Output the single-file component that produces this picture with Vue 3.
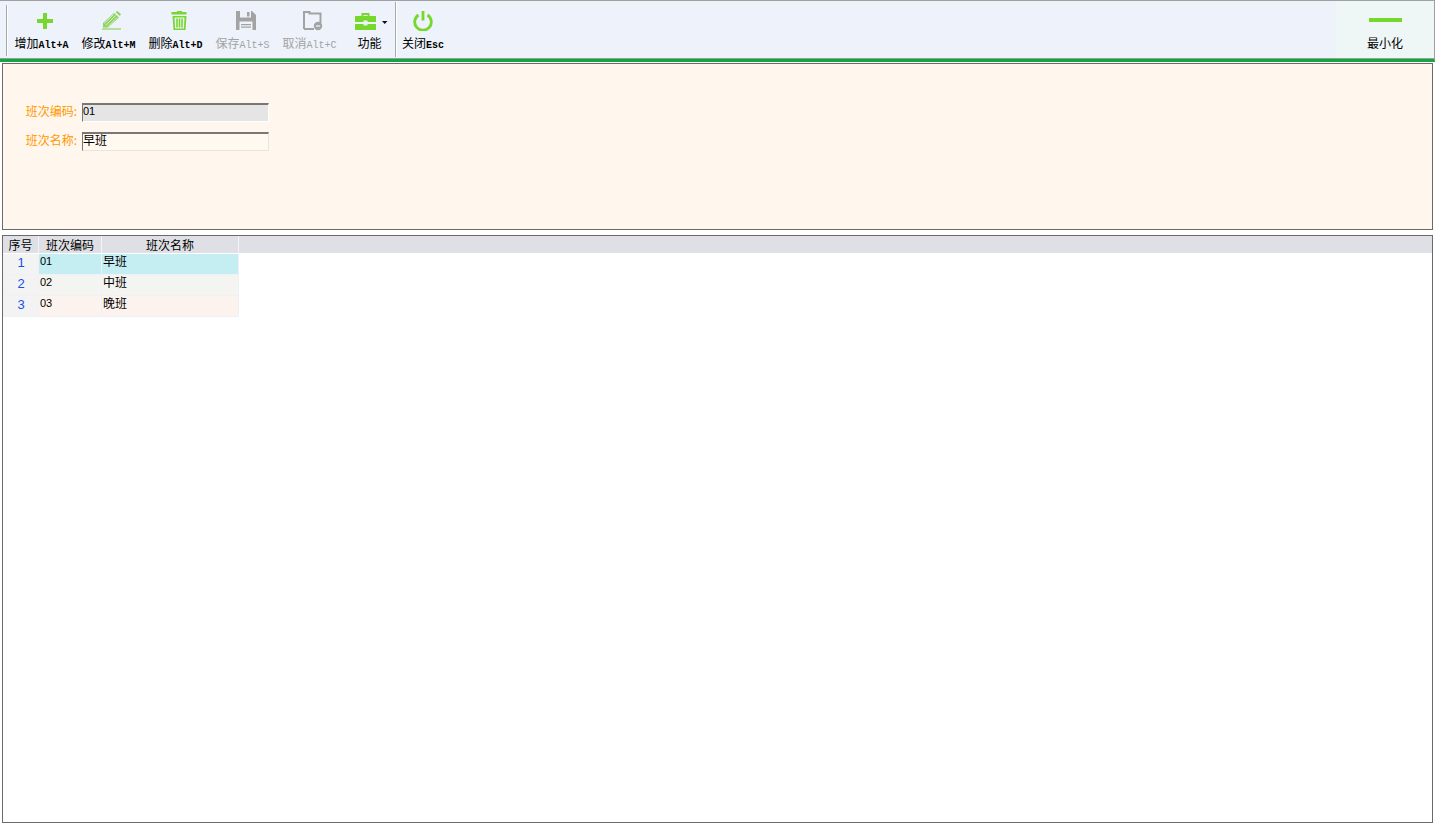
<script setup>
const tools = [
  { cn: '增加', key: 'Alt+A', icon: 'add', w: 67 },
  { cn: '修改', key: 'Alt+M', icon: 'edit', w: 67 },
  { cn: '删除', key: 'Alt+D', icon: 'del', w: 67 },
  { cn: '保存', key: 'Alt+S', icon: 'save', w: 67, off: true },
  { cn: '取消', key: 'Alt+C', icon: 'cancel', w: 67, off: true },
  { cn: '功能', key: '', icon: 'func', w: 51 }
]
const rows = [
  { n: 1, code: '01', name: '早班', c: 'r1' },
  { n: 2, code: '02', name: '中班', c: 'r2' },
  { n: 3, code: '03', name: '晚班', c: 'r3' }
]
</script>

<template>
  <div class="page">
    <header class="bar">
      <div class="grip"></div>
      <div v-for="t in tools" :key="t.icon" class="tool" :class="[t.icon, { off: t.off }]" :style="{ width: t.w + 'px' }">
        <div class="ico">
          <svg v-if="t.icon === 'add'" width="20" height="20" viewBox="0 0 20 20"><path d="M8 2h4v6h6v4h-6v6H8v-6H2V8h6z" fill="#76d72c"/></svg>
          <svg v-else-if="t.icon === 'edit'" width="20" height="20" viewBox="0 0 20 20"><path d="M1 16.500v-4.500L12 2l5 4.500L6 16.500z" fill="#8fd45c"/><path d="M13.500 1 15.500 0 19 3.200 17.800 5z" fill="#8fd45c"/><path d="M3.500 14.500 13.500 4.500M6 15.500 15 6.500M2 12.500 11.500 3.500" stroke="#edf2fb" stroke-width=".8"/><path d="M0 18h19" stroke="#8fd45c" stroke-width="1.200"/></svg>
          <svg v-else-if="t.icon === 'del'" width="20" height="20" viewBox="0 0 20 20"><path d="M7.500 1 8.500 0h4l1 1h4v2.500h-15V1z" fill="#76d72c"/><path d="M3.500 5h14l-1 14h-12zM5.500 6.500l.6 11h8.800l.6-11z" fill="#76d72c" fill-rule="evenodd"/><path d="M7.200 7.500h1.600v9H7.200zM9.700 7.500h1.600v9H9.700zM12.200 7.500h1.600v9h-1.600z" fill="#76d72c"/></svg>
          <svg v-else-if="t.icon === 'save'" width="20" height="20" viewBox="0 0 20 20"><path d="M0 0h16l4 4v15H0z" fill="#a3a3a3"/><path d="M4 0h11v6.500H4z" fill="#edf2fb"/><path d="M11 1h2.500v4.500H11z" fill="#a3a3a3"/><path d="M3.500 10.500h13v8.500h-13z" fill="#edf2fb"/><path d="M5 13h10v1.200H5zM5 15.500h10v1.200H5z" fill="#a3a3a3"/></svg>
          <svg v-else-if="t.icon === 'cancel'" width="20" height="20" viewBox="0 0 20 20"><path d="M1 18V1h5.500v1.500H17.500V12" fill="none" stroke="#a3a3a3" stroke-width="2"/><path d="M1 18h10" fill="none" stroke="#a3a3a3" stroke-width="2"/><circle cx="15" cy="15" r="4.200" fill="#a3a3a3"/><path d="M13 15h4" stroke="#edf2fb" stroke-width="1.300"/></svg>
          <svg v-else width="34" height="20" viewBox="0 0 34 20"><path d="M6.500 5V2h8v3h-2V4h-4v1z" fill="#76d72c"/><path d="M0 5h21v6H12.500V9.500h-4V11H0zM0 13h8.500v1.500h4V13H21v6H0z" fill="#76d72c"/><path d="M27 10h5.500L29.750 13z" fill="#111"/></svg>
        </div>
        <div class="lbl">{{ t.cn }}<span class="mono">{{ t.key }}</span></div>
      </div>
      <div class="sep"></div>
      <div class="tool close">
        <div class="ico">
          <svg width="20" height="20" viewBox="0 0 20 20"><path d="M5.500 4a8.300 8.300 0 1 0 9 0" fill="none" stroke="#76d72c" stroke-width="2.800"/><path d="M10 0v9.500" stroke="#76d72c" stroke-width="2.800"/></svg>
        </div>
        <div class="lbl">关闭<span class="mono">Esc</span></div>
      </div>
      <div class="min">
        <div class="dash"></div>
        <div class="lbl">最小化</div>
      </div>
    </header>

    <section class="form">
      <div class="field">
        <label>班次编码:</label>
        <div class="inp ro">01</div>
      </div>
      <div class="field">
        <label>班次名称:</label>
        <div class="inp">早班</div>
      </div>
    </section>

    <section class="grid">
      <div class="head">
        <div class="c0">序号</div>
        <div class="c1">班次编码</div>
        <div class="c2">班次名称</div>
      </div>
      <div v-for="r in rows" :key="r.n" class="row" :class="r.c">
        <div class="c0 num">{{ r.n }}</div>
        <div class="c1 code">{{ r.code }}</div>
        <div class="c2 nm">{{ r.name }}</div>
      </div>
    </section>
  </div>
</template>

<style>
html, body { margin: 0; background: #fff; overflow: hidden; }
</style>

<style scoped>
.page {
  width: 1435px;
  height: 826px;
  display: flex;
  flex-direction: column;
  font-family: "Noto Sans CJK SC", "Liberation Sans", sans-serif;
  font-size: 12px;
  color: #000;
  box-sizing: border-box;
}
.bar {
  height: 62px;
  box-sizing: border-box;
  flex: none;
  display: flex;
  background: #edf2fb;
  border-top: 1px solid #a0a0a0;
  border-right: 1px solid #a0a0a0;
  border-bottom: 3px solid #10a83c;
  box-shadow: inset 0 -1px 0 #9a9a9a;
  padding-bottom: 1px;
}
.grip {
  width: 1px;
  margin: 4px 0 2px 6px;
  background: #a8a8a8;
  border-right: 1px solid #fff;
}
.tool {
  flex: none;
  display: flex;
  flex-direction: column;
  align-items: center;
}
.ico {
  height: 20px;
  margin: 10px 0 0 6px;
  display: flex;
  justify-content: center;
  align-items: center;
}
.lbl {
  margin-top: 4px;
  line-height: 16px;
  white-space: nowrap;
  color: #000;
}
.func .lbl { margin-left: 2px; }
.off .lbl { color: #a3a3a3; }
.mono {
  font-family: "Liberation Mono", monospace;
  font-size: 10px;
  font-weight: 700;
}
.off .mono { font-weight: 400; }
.sep {
  width: 1px;
  margin: 1px 0 1px 1px;
  background: #a8a8a8;
  border-right: 1px solid #fff;
}
.close { width: 52px; }
.close .ico { margin-left: 0; }
.min {
  margin-left: auto;
  width: 98px;
  background: #eef6f6;
  display: flex;
  flex-direction: column;
  align-items: center;
}
.dash {
  width: 33px;
  height: 4px;
  margin-top: 17px;
  background: #76d72c;
}
.min .lbl { margin-top: 13px; }

.form {
  flex: none;
  box-sizing: border-box;
  height: 167px;
  margin: 1px 2px 0;
  border: 1px solid #6a6a6a;
  background: #fff7ee;
  padding-top: 39px;
  display: flex;
  flex-direction: column;
  gap: 10px;
}
.field {
  display: flex;
  align-items: flex-start;
  height: 19px;
}
.field label {
  width: 74px;
  padding-right: 5px;
  text-align: right;
  color: #ff9800;
  line-height: 15px;
  flex: none;
}
.inp {
  width: 187px;
  height: 19px;
  box-sizing: border-box;
  border-top: 2px solid #777;
  border-left: 1px solid #777;
  border-right: 1px solid #e6e6e0;
  border-bottom: 1px solid #e6e6e0;
  background: #fff9f0;
  line-height: 12px;
  overflow: hidden;
}
.ro {
  background: #e5e5e5;
  border-right-color: #fff;
  border-bottom-color: #fff;
  font-family: "Liberation Sans", sans-serif;
  font-size: 11px;
}

.grid {
  flex: none;
  box-sizing: border-box;
  height: 588px;
  margin: 5px 2px 0;
  border: 1px solid #6a6a6a;
  background: #fff;
}
.head {
  display: flex;
  height: 17px;
  margin-bottom: 1px;
  background: #dfe0e5;
  line-height: 17px;
  text-align: center;
}
.head > div { border-right: 1px solid #f2f4f8; box-sizing: border-box; }
.c0 { width: 36px; flex: none; box-sizing: border-box; }
.c1 { width: 63px; flex: none; box-sizing: border-box; }
.c2 { width: 137px; flex: none; box-sizing: border-box; }
.row {
  display: flex;
  height: 21px;
  box-sizing: border-box;
  width: 236px;
}
.row > div { border-right: 1px solid #eef2f8; border-bottom: 1px solid #eef2f8; }
.num {
  background: #f3f3f3;
  color: #1550f0;
  text-align: center;
  font-family: "Liberation Sans", sans-serif;
  font-size: 13px;
  line-height: 17px;
  padding-left: 1px;
}
.code {
  font-family: "Liberation Sans", sans-serif;
  font-size: 11px;
  line-height: 14px;
  padding-left: 1px;
}
.nm { font-size: 12px; line-height: 14px; padding-left: 1px; }
.r1 .code, .r1 .nm { background: #c4eef2; }
.r2 .code, .r2 .nm { background: #f4f4f1; }
.r3 .code, .r3 .nm { background: #fdf3ee; }
</style>
